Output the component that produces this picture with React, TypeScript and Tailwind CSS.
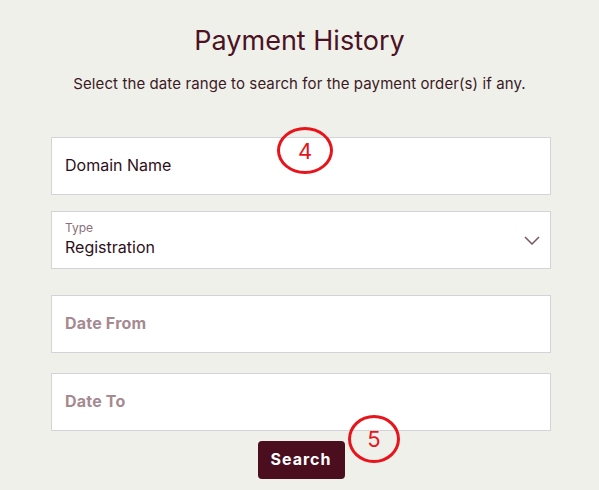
const FONT = { fontFamily: 'Inter, "Liberation Sans", sans-serif' };

function Chevron() {
  return (
    <svg width="16" height="9" viewBox="0 0 16 9" fill="none" className="text-[#7a5565]">
      <path d="M1 1l7 7 7-7" stroke="currentColor" strokeWidth="1.5" />
    </svg>
  );
}

function Marker({ n, className }: { n: string; className: string }) {
  return (
    <div
      className={`absolute flex items-center justify-center rounded-[50%] border-[3px] border-[#e8141c] text-[22px] leading-none text-[#e8141c] ${className}`}
    >
      {n}
    </div>
  );
}

export default function App() {
  return (
    <div style={FONT} className="relative h-[490px] w-[599px] bg-[#f0f0eb] text-[#3b1220]">
      <div className="flex flex-col items-center pt-[24px]">
        <h1 className="text-[27px] leading-[34px] text-[#4a1222]">Payment History</h1>
        <p className="mt-[16px] text-[15px] leading-[20px] tracking-[0.1px] text-[#3b1a24]">
          Select the date range to search for the payment order(s) if any.
        </p>
      </div>

      <div className="ml-[51px] mt-[43px] flex w-[500px] flex-col">
        <div className="flex h-[58px] items-center border border-[#d2d4da] bg-white px-[13px] pb-[3px] text-[16px] text-[#2e0f1a]">
          Domain Name
        </div>

        <div className="mt-[16px] flex h-[58px] items-center justify-between border border-[#d2d4da] bg-white pl-[13px] pr-[10px]">
          <div className="-mt-[3px] flex flex-col">
            <span className="text-[12px] leading-[14px] text-[#8a7078]">Type</span>
            <span className="mt-[2px] text-[16px] leading-[20px] text-[#2e0f1a]">Registration</span>
          </div>
          <Chevron />
        </div>

        <div className="mt-[26px] flex h-[58px] items-center border border-[#d2d4da] bg-white px-[13px] pb-[3px] text-[16px] font-bold tracking-[0.2px] text-[#a58a92]">
          Date From
        </div>

        <div className="mt-[20px] flex h-[58px] items-center border border-[#d2d4da] bg-white px-[13px] pb-[3px] text-[16px] font-bold tracking-[0.2px] text-[#a58a92]">
          Date To
        </div>

        <div className="mt-[10px] flex justify-center">
          <button className="h-[38px] w-[87px] rounded-[4px] bg-[#4b0e1f] pb-[3px] text-[16px] font-bold tracking-[1px] text-white">
            Search
          </button>
        </div>
      </div>

      <Marker n="4" className="left-[277px] top-[127px] h-[47px] w-[56px]" />
      <Marker n="5" className="left-[348px] top-[415px] h-[48px] w-[52px]" />
    </div>
  );
}
